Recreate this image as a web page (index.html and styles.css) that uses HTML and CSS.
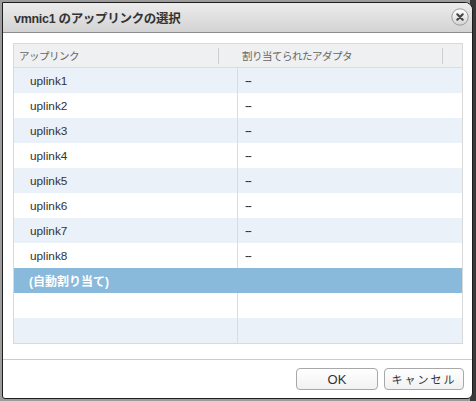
FILE: index.html
```html
<!DOCTYPE html>
<html lang="ja">
<head>
<meta charset="utf-8">
<link rel="stylesheet" href="styles.css">
</head>
<body>
<div class="backdrop">
  <div class="dialog">
    <div class="titlebar">
      <span class="title">vmnic1 のアップリンクの選択</span>
      <span class="close">
        <svg width="18" height="18" viewBox="0 0 18 18">
          <defs>
            <linearGradient id="cg" x1="0" y1="0" x2="0" y2="1">
              <stop offset="0" stop-color="#ffffff"/>
              <stop offset="1" stop-color="#d4d4d4"/>
            </linearGradient>
          </defs>
          <circle cx="9" cy="9" r="8.2" fill="url(#cg)" stroke="#9a9a9a" stroke-width="1"/>
          <path d="M6.3 6.3 L11.7 11.7 M11.7 6.3 L6.3 11.7" stroke="#454545" stroke-width="2.2" stroke-linecap="round"/>
        </svg>
      </span>
    </div>
    <div class="body">
      <div class="grid">
        <div class="head">
          <div class="hcell">アップリンク<span class="handle"></span></div>
          <div class="hcell">割り当てられたアダプタ<span class="handle"></span></div>
        </div>
        <div class="row alt"><div class="c1">uplink1</div><div class="c2">--</div></div>
        <div class="row"><div class="c1">uplink2</div><div class="c2">--</div></div>
        <div class="row alt"><div class="c1">uplink3</div><div class="c2">--</div></div>
        <div class="row"><div class="c1">uplink4</div><div class="c2">--</div></div>
        <div class="row alt"><div class="c1">uplink5</div><div class="c2">--</div></div>
        <div class="row"><div class="c1">uplink6</div><div class="c2">--</div></div>
        <div class="row alt"><div class="c1">uplink7</div><div class="c2">--</div></div>
        <div class="row"><div class="c1">uplink8</div><div class="c2">--</div></div>
        <div class="row sel"><div class="c1">(自動割り当て)</div><div class="c2"></div></div>
        <div class="row"><div class="c1"></div><div class="c2"></div></div>
        <div class="row alt"><div class="c1"></div><div class="c2"></div></div>
      </div>
    </div>
    <div class="footer">
      <button class="btn ok">OK</button>
      <button class="btn cancel">キャンセル</button>
    </div>
  </div>
</div>
</body>
</html>
```
FILE: styles.css
```css
html, body {
  margin: 0;
  padding: 0;
}
body {
  width: 476px;
  height: 401px;
  overflow: hidden;
  background: linear-gradient(90deg, #9c9c9c 0, #9c9c9c 470px, #3a3a3a 470px);
  font-family: "Liberation Sans", "Noto Sans CJK JP", sans-serif;
}
.backdrop {
  padding: 2px 0 0 2px;
}
.dialog {
  width: 469px;
  height: 395px;
  border: 1px solid #1e1e1e;
  border-radius: 0 8px 6px 3px;
  background: #ffffff;
  display: flex;
  flex-direction: column;
  overflow: hidden;
}
.titlebar {
  height: 29px;
  border-bottom: 1px solid #8c8c8c;
  background: linear-gradient(#ececec, #d3d3d3);
  display: flex;
  align-items: center;
  justify-content: space-between;
  padding: 0 3px 0 11px;
}
.title {
  font-size: 12.5px;
  font-weight: bold;
  color: #333333;
  letter-spacing: -0.3px;
  margin-top: -1px;
}
.close {
  display: flex;
  margin-top: -1px;
}
.body {
  padding: 10px 9px 0 10px;
}
.grid {
  border: 1px solid #d9d9d9;
  display: flex;
  flex-direction: column;
}
.head {
  display: grid;
  grid-template-columns: 224px 1fr;
  height: 23px;
  background: #eef0f2;
  border-bottom: 1px solid #dcdcdc;
}
.hcell {
  position: relative;
  font-size: 10.5px;
  letter-spacing: -0.5px;
  color: #666666;
  display: flex;
  align-items: center;
  padding-left: 5px;
}
.hcell:nth-child(2) {
  padding-left: 4px;
}
.handle {
  position: absolute;
  right: 19px;
  top: 4px;
  height: 16px;
  border-left: 1px solid #cfcfcf;
}
.row {
  display: grid;
  grid-template-columns: 224px 1fr;
  height: 25px;
  background: #ffffff;
}
.row.alt {
  background: #eaf1f8;
}
.row.sel {
  background: #89b9db;
}
.c1 {
  border-right: 1px solid #dcdcdc;
  font-size: 11.8px;
  color: #333333;
  display: flex;
  align-items: center;
  padding-left: 16px;
}
.c2 {
  font-size: 12px;
  color: #333333;
  display: flex;
  align-items: center;
  padding-left: 7px;
  letter-spacing: -1.2px;
}
.row.sel .c1 {
  color: #ffffff;
  font-weight: bold;
  font-size: 12px;
  padding-left: 15px;
  border-right-color: #89b9db;
}
.footer {
  margin-top: 15px;
  border-top: 1px solid #cccccc;
  display: flex;
  justify-content: flex-end;
  gap: 6px;
  padding: 8px 8px 0 0;
}
.btn {
  height: 22px;
  border: 1px solid #a8a8a8;
  border-radius: 4px;
  background: linear-gradient(#ffffff, #f1f1f1);
  font-family: "Liberation Sans", "Noto Sans CJK JP", sans-serif;
  color: #333333;
  padding: 0;
}
.ok {
  width: 82px;
  font-size: 13px;
}
.cancel {
  width: 80px;
  font-size: 11px;
  letter-spacing: 2px;
}
```
